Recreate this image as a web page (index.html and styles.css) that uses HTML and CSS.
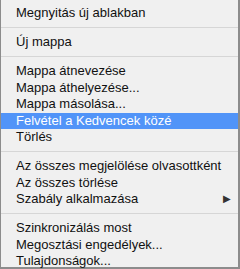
FILE: index.html
```html
<!DOCTYPE html>
<html>
<head>
<meta charset="utf-8">
<link rel="stylesheet" href="styles.css">
</head>
<body>
<div class="menu">
  <div class="item">Megnyitás új ablakban</div>
  <div class="sep"></div>
  <div class="item">Új mappa</div>
  <div class="sep"></div>
  <div class="item">Mappa átnevezése</div>
  <div class="item">Mappa áthelyezése...</div>
  <div class="item">Mappa másolása...</div>
  <div class="item active">Felvétel a Kedvencek közé</div>
  <div class="item">Törlés</div>
  <div class="sep"></div>
  <div class="item">Az összes megjelölése olvasottként</div>
  <div class="item">Az összes törlése</div>
  <div class="item sub">Szabály alkalmazása<span class="arrow">▶</span></div>
  <div class="sep"></div>
  <div class="item">Szinkronizálás most</div>
  <div class="item">Megosztási engedélyek...</div>
  <div class="item">Tulajdonságok...</div>
</div>
</body>
</html>
```
FILE: styles.css
```css
html, body {
  margin: 0;
  padding: 0;
  background: #efefef;
}
.menu {
  box-sizing: border-box;
  width: 240px;
  height: 269px;
  background: #f0f0f0;
  border-left: 1px solid #8c8c8c;
  border-right: 2px solid #8c8c8c;
  border-bottom: 2px solid #8c8c8c;
  padding-top: 5px;
  font-family: "Liberation Sans", Arial, sans-serif;
  font-size: 13px;
  color: #111111;
}
.item {
  height: 16.5px;
  line-height: 16.5px;
  padding-left: 15px;
  padding-right: 7px;
  display: flex;
  align-items: center;
  white-space: nowrap;
}
.item.active {
  background: #5194f8;
  color: #ffffff;
}
.sub {
  justify-content: space-between;
}
.arrow {
  font-size: 10px;
  color: #333;
}
.sep {
  height: 1px;
  background: #d6d6d6;
  margin: 5px 0 6.5px 0;
}
```
